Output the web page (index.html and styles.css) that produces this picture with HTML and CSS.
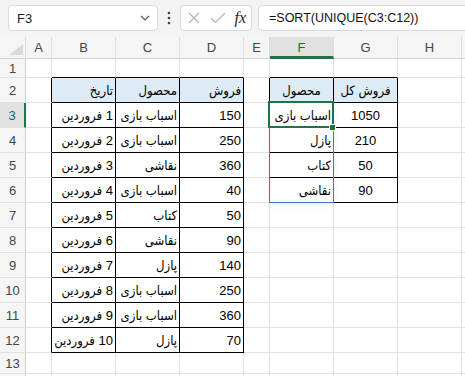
FILE: index.html
```html
<!DOCTYPE html>
<html lang="fa">
<head>
  <meta charset="UTF-8">
  <meta name="viewport" content="width=device-width, initial-scale=1.0">
  <title>SORT UNIQUE</title>
  <link rel="stylesheet" href="styles.css">
</head>
<body>
  <div class="app">
    <!-- نوار فرمول -->
    <div class="toolbar">
      <div class="nameBox">
        <span>F3</span>
        <svg width="10" height="6" viewBox="0 0 10 6"><polyline points="1,1 5,5 9,1" fill="none" stroke="#555" stroke-width="1.2"/></svg>
      </div>
      <div class="dots">
        <svg width="4" height="14" viewBox="0 0 4 14"><circle cx="2" cy="2" r="1.3" fill="#444"/><circle cx="2" cy="7" r="1.3" fill="#444"/><circle cx="2" cy="12" r="1.3" fill="#444"/></svg>
      </div>
      <div class="fnBox">
        <svg width="14" height="14" viewBox="0 0 14 14"><path d="M2 2 L12 12 M12 2 L2 12" stroke="#b4b4b4" stroke-width="1.2"/></svg>
        <svg width="16" height="14" viewBox="0 0 16 14"><polyline points="1,7 5.5,11.5 15,2" fill="none" stroke="#b4b4b4" stroke-width="1.2"/></svg>
        <span class="fx">fx</span>
      </div>
      <div class="formula">=SORT(UNIQUE(C3:C12))</div>
    </div>

    <!-- شیت -->
    <div class="sheet">
      <div class="row headRow">
        <div class="corner"><svg width="14" height="11" viewBox="0 0 14 11"><polygon points="14,0 14,11 0,11" fill="#d9d9d9"/></svg></div>
        <div>A</div><div>B</div><div>C</div><div>D</div><div>E</div><div class="colSel">F</div><div>G</div><div>H</div><div class="rest"></div>
      </div>

      <div class="row short">
        <div class="rh">1</div>
        <div></div><div class="tt"></div><div class="tt"></div><div class="tt"></div><div></div><div class="tt"></div><div class="tt"></div><div></div><div class="rest"></div>
      </div>

      <div class="row">
        <div class="rh">2</div>
        <div class="tl"></div>
        <div class="tb hd fa">تاریخ</div>
        <div class="tb hd fa">محصول</div>
        <div class="tb hd fa">فروش</div>
        <div class="tl"></div>
        <div class="tb hd fa mid">محصول</div>
        <div class="tb hd fa mid">فروش کل</div>
        <div></div><div class="rest"></div>
      </div>

      <div class="row">
        <div class="rh rowSel">3</div>
        <div class="tl"></div>
        <div class="tb fa">1 فروردین</div>
        <div class="tb fa">اسباب بازی</div>
        <div class="tb num">150</div>
        <div class="tl"></div>
        <div class="tb fa active">اسباب بازی<span class="spill"></span><span class="cursor"></span><span class="handle"></span></div>
        <div class="tb mid">1050</div>
        <div></div><div class="rest"></div>
      </div>

      <div class="row">
        <div class="rh">4</div>
        <div class="tl"></div>
        <div class="tb fa">2 فروردین</div>
        <div class="tb fa">اسباب بازی</div>
        <div class="tb num">250</div>
        <div class="tl"></div>
        <div class="tb fa">پازل</div>
        <div class="tb mid">210</div>
        <div></div><div class="rest"></div>
      </div>

      <div class="row">
        <div class="rh">5</div>
        <div class="tl"></div>
        <div class="tb fa">3 فروردین</div>
        <div class="tb fa">نقاشی</div>
        <div class="tb num">360</div>
        <div class="tl"></div>
        <div class="tb fa">کتاب</div>
        <div class="tb mid">50</div>
        <div></div><div class="rest"></div>
      </div>

      <div class="row">
        <div class="rh">6</div>
        <div class="tl"></div>
        <div class="tb fa">4 فروردین</div>
        <div class="tb fa">اسباب بازی</div>
        <div class="tb num">40</div>
        <div class="tl"></div>
        <div class="tb fa">نقاشی</div>
        <div class="tb mid">90</div>
        <div></div><div class="rest"></div>
      </div>

      <div class="row">
        <div class="rh">7</div>
        <div class="tl"></div>
        <div class="tb fa">5 فروردین</div>
        <div class="tb fa">کتاب</div>
        <div class="tb num">50</div>
        <div></div><div></div><div></div><div></div><div class="rest"></div>
      </div>

      <div class="row">
        <div class="rh">8</div>
        <div class="tl"></div>
        <div class="tb fa">6 فروردین</div>
        <div class="tb fa">نقاشی</div>
        <div class="tb num">90</div>
        <div></div><div></div><div></div><div></div><div class="rest"></div>
      </div>

      <div class="row">
        <div class="rh">9</div>
        <div class="tl"></div>
        <div class="tb fa">7 فروردین</div>
        <div class="tb fa">پازل</div>
        <div class="tb num">140</div>
        <div></div><div></div><div></div><div></div><div class="rest"></div>
      </div>

      <div class="row">
        <div class="rh">10</div>
        <div class="tl"></div>
        <div class="tb fa">8 فروردین</div>
        <div class="tb fa">اسباب بازی</div>
        <div class="tb num">250</div>
        <div></div><div></div><div></div><div></div><div class="rest"></div>
      </div>

      <div class="row">
        <div class="rh">11</div>
        <div class="tl"></div>
        <div class="tb fa">9 فروردین</div>
        <div class="tb fa">اسباب بازی</div>
        <div class="tb num">360</div>
        <div></div><div></div><div></div><div></div><div class="rest"></div>
      </div>

      <div class="row">
        <div class="rh">12</div>
        <div class="tl"></div>
        <div class="tb fa">10 فروردین</div>
        <div class="tb fa">پازل</div>
        <div class="tb num">70</div>
        <div></div><div></div><div></div><div></div><div class="rest"></div>
      </div>

      <div class="row tall">
        <div class="rh">13</div>
        <div></div><div></div><div></div><div></div><div></div><div></div><div></div><div></div><div class="rest"></div>
      </div>

      <div class="row tall">
        <div class="rh"></div>
        <div></div><div></div><div></div><div></div><div></div><div></div><div></div><div></div><div class="rest"></div>
      </div>
    </div>
  </div>
</body>
</html>
```

FILE: styles.css
```css
html, body {
  padding: 0;
  margin: 0;
  background-color: #ffffff;
  color: #000000;
  font-family: "Liberation Sans", "DejaVu Sans", sans-serif;
}

.app {
  width: 465px;
  height: 376px;
  overflow: hidden;
}

/* formula bar */

.toolbar {
  height: 37px;
  box-sizing: border-box;
  padding: 5px 0 0 8px;
  display: flex;
  align-items: flex-start;
  background-color: #f3f3f3;
}

.nameBox {
  width: 150px;
  height: 26px;
  box-sizing: border-box;
  padding: 0 7px 0 8px;
  display: flex;
  align-items: center;
  justify-content: space-between;
  background-color: #ffffff;
  border: 1px solid #dadada;
  border-radius: 4px;
  font-size: 13px;
  color: #222222;
}

.dots {
  width: 22px;
  height: 26px;
  display: flex;
  align-items: center;
  justify-content: center;
}

.fnBox {
  width: 72px;
  height: 26px;
  box-sizing: border-box;
  padding: 0 5px 0 6px;
  display: flex;
  align-items: center;
  justify-content: space-between;
  background-color: #ffffff;
  border: 1px solid #dadada;
  border-radius: 4px;
}

.fx {
  font-family: "Liberation Serif", serif;
  font-style: italic;
  font-size: 16px;
  color: #222222;
}

.formula {
  flex: 1;
  height: 26px;
  box-sizing: border-box;
  margin: 0 -6px 0 6px;
  padding-left: 10px;
  background-color: #ffffff;
  border: 1px solid #dadada;
  border-radius: 4px;
  font-size: 12.5px;
  line-height: 24px;
  color: #111111;
}

/* grid */

.row {
  display: grid;
  grid-template-columns: 26px 26px 64px 64px 64px 26px 64px 64px 64px 1fr;
  height: 25px;
  line-height: 23px;
  font-size: 13px;
}

.row > div {
  box-sizing: border-box;
  padding: 1px 2px 0;
  white-space: nowrap;
  overflow: hidden;
  border-right: 1px solid #e1e1e1;
  border-bottom: 1px solid #e1e1e1;
}

.row.short {
  height: 19px;
  line-height: 17px;
}

.row.tall {
  height: 21px;
  line-height: 19px;
}

.row .rest {
  border-right: none;
}

.headRow {
  height: 22px;
  line-height: 20px;
  background-color: #f5f5f5;
  color: #444444;
}

.headRow > div {
  text-align: center;
  border-right-color: #dcdcdc;
  border-bottom-color: #d2d2d2;
}

.corner {
  display: flex;
  align-items: flex-end;
  justify-content: flex-end;
  padding: 0 2px 3px 0 !important;
}

.row .colSel {
  background-color: #e1e1e1;
  border-bottom: 3px solid #217346;
  color: #1d6a40;
}

.row .rh {
  text-align: center;
  background-color: #f5f5f5;
  color: #444444;
  border-right-color: #d2d2d2;
}

.row .rowSel {
  background-color: #e1e1e1;
  border-right: 2px solid #217346;
  color: #1d6a40;
}

/* table borders */

.row .tb {
  border-right-color: #000000;
  border-bottom-color: #000000;
}

.row .tl {
  border-right-color: #000000;
}

.row .tt {
  border-bottom-color: #000000;
}

.hd {
  background-color: #ddebf7;
}

.fa {
  direction: rtl;
  text-align: right;
  font-family: "Liberation Sans", "DejaVu Sans Condensed", "DejaVu Sans", sans-serif;
  font-size: 13px;
}

.num {
  text-align: right;
}

.row .mid {
  text-align: center;
}

/* selection */

.row .active {
  position: relative;
  overflow: visible;
}

.spill {
  position: absolute;
  left: -1px;
  top: -1px;
  width: 65px;
  height: 101px;
  box-sizing: border-box;
  border: 1px solid #4472c4;
  box-shadow: 0 3px 5px rgba(0, 0, 0, 0.06);
}

.cursor {
  position: absolute;
  left: -2px;
  top: -2px;
  width: 66px;
  height: 27px;
  box-sizing: border-box;
  border: 2px solid #217346;
}

.handle {
  position: absolute;
  left: 59px;
  top: 21px;
  width: 7px;
  height: 7px;
  box-sizing: border-box;
  background-color: #217346;
  border: 1px solid #ffffff;
}
```
